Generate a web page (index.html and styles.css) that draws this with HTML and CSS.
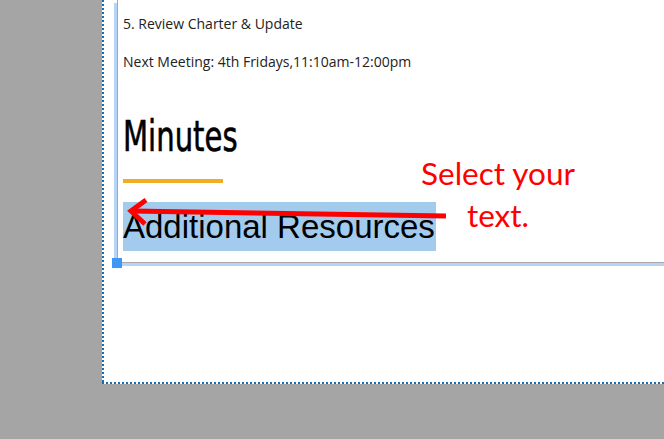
FILE: index.html
```html
<!DOCTYPE html>
<html>
  <head>
    <title>Minutes</title>
    <link rel="stylesheet" href="styles.css">
  </head>
  <body>
    <div class="page">
      <div class="frame">
        <p class="agenda">5. Review Charter &amp; Update</p>
        <p class="agenda next">Next Meeting: 4th Fridays,11:10am-12:00pm</p>
        <h2 class="heading">Minutes</h2>
        <div class="rule"></div>
        <h3 class="resources"><span class="selected">Additional Resources</span></h3>
        <div class="handle"></div>
      </div>
      <!-- callout drawn over the page -->
      <svg class="arrow" width="562" height="439" viewBox="102 0 562 439">
        <path d="M446 216 L131 211" stroke="#ff0000" stroke-width="5" fill="none"/>
        <path d="M146 200 L131 211 L145 224" stroke="#ff0000" stroke-width="5" fill="none" stroke-linejoin="miter"/>
      </svg>
      <div class="callout">Select your<br>text.</div>
    </div>
  </body>
</html>
```

FILE: styles.css
```css
* {
  margin: 0;
  padding: 0;
  box-sizing: border-box;
}

html, body {
  height: 100%;
  overflow: hidden;
}

body {
  background: #a5a5a5;
  font-family: 'Open Sans', sans-serif;
  color: #222;
}

.page {
  position: relative;
  width: 562px;
  height: 384px;
  margin-left: 102px;
  padding-left: 15px;
  overflow: hidden;
  background:
    repeating-linear-gradient(to bottom, #1a6bb0 0 2px, transparent 2px 4px) left top / 2px 100% no-repeat,
    repeating-linear-gradient(to right, #1a6bb0 0 2px, transparent 2px 4px) left bottom / 100% 2px no-repeat,
    #fff;
}

.frame {
  position: relative;
  padding: 15px 0 11px 5px;
  border-left: 1px solid #a8a8a8;
  border-bottom: 1px solid #a8a8a8;
  box-shadow: -3px 3px 0 0 #b5d4f8, 0 3px 0 0 #b5d4f8;
}

.agenda {
  font-size: 14px;
  line-height: 18px;
}

.next {
  margin-top: 20px;
}

.heading {
  font-family: 'DejaVu Sans Condensed', 'DejaVu Sans', sans-serif;
  font-weight: normal;
  font-size: 42px;
  line-height: 48px;
  margin-top: 42px;
  color: #000;
  -webkit-text-stroke: 0.6px #000;
  transform: scaleX(0.77);
  transform-origin: left center;
}

.rule {
  width: 100px;
  height: 4px;
  margin-top: 18px;
  background: #f0ae27;
}

.resources {
  margin-top: 19px;
  font-family: 'Liberation Sans', Arial, sans-serif;
  font-weight: normal;
  font-size: 33px;
  line-height: 49px;
  color: #000;
}

.selected {
  display: inline-block;
  width: 313px;
  background: #a3cbee;
  white-space: nowrap;
}

.handle {
  position: absolute;
  left: -6px;
  bottom: -6px;
  width: 10px;
  height: 10px;
  background: #3d97f7;
}

.arrow {
  position: absolute;
  top: 0;
  left: 0;
}

.callout {
  position: absolute;
  left: 316px;
  top: 152px;
  width: 160px;
  text-align: center;
  font-family: Lato, sans-serif;
  font-size: 31.5px;
  line-height: 42px;
  color: #ff0000;
}
```
